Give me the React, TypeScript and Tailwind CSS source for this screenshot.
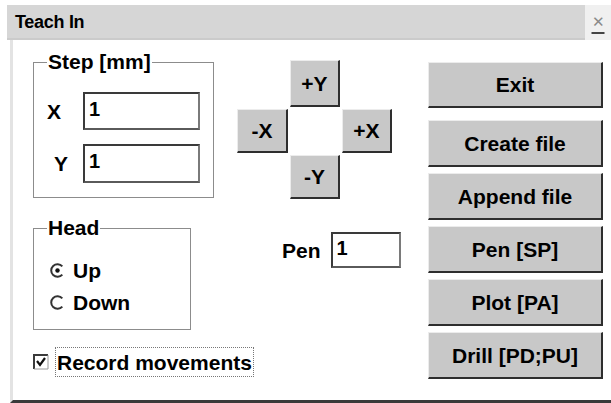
import React from "react";

const face = "bg-[#c8c8c8] border-r-2 border-b-2 border-r-[#2e2e2e] border-b-[#2e2e2e] border-t border-l border-t-[#ececec] border-l-[#ececec]";

function PushButton({ label, className = "" }: { label: string; className?: string }) {
  return (
    <button
      type="button"
      className={`${face} flex items-center justify-center text-[21px] font-bold text-black leading-none ${className}`}
    >
      {label}
    </button>
  );
}

function Field({ className = "" }: { className?: string }) {
  return (
    <input
      readOnly
      value="1"
      className={`bg-white border-2 border-t-[#3a3a3a] border-l-[#3a3a3a] border-r-[#7a7a7a] border-b-[#5a5a5a] pl-[4px] pb-[4px] text-[20px] font-bold text-black leading-none outline-none ${className}`}
    />
  );
}

function Radio({ checked }: { checked?: boolean }) {
  return (
    <svg width="15" height="15" viewBox="0 0 15 15" className="shrink-0">
      <path d="M12.3 3.4 A6.3 6.3 0 1 0 12.3 11.6" fill="none" stroke="#333" strokeWidth="2" />
      {checked && <circle cx="7.5" cy="7.5" r="2.2" fill="#111" />}
    </svg>
  );
}

function GroupBox({ title, children, className = "" }: { title: string; children: React.ReactNode; className?: string }) {
  return (
    <fieldset className={`border border-[#8c8c8c] px-[13px] ${className}`}>
      <legend className="px-[1px] text-[21px] font-bold leading-[24px] text-black">{title}</legend>
      {children}
    </fieldset>
  );
}

export default function App() {
  return (
    <div className="w-[611px] h-[403px] bg-white overflow-hidden font-['Liberation_Sans',Arial,sans-serif] text-black">
      {/* title bar */}
      <div className="flex h-[40px] pt-[5px]">
        <div className="ml-[7px] flex-1 flex items-center bg-[#d6d6d6] pl-[8px] border-b-2 border-[#cbcbcb]">
          <span className="text-[18px] font-bold tracking-[-0.3px] leading-none">Teach In</span>
        </div>
        <div className="w-[26px] flex items-start justify-center bg-[#f0f0f0]">
          <span className="mt-[9px] text-[15px] leading-none text-[#8a8a8a] underline decoration-[#444] decoration-2 underline-offset-[5px]">✕</span>
        </div>
      </div>

      {/* body */}
      <div className="ml-[10px] h-[363px] border-l-[3px] border-l-[#e3e3e3] border-b-[3px] border-b-[#3a3a3a] flex items-start">
        {/* left column */}
        <div className="ml-[20px] mt-[10px] w-[180px] flex flex-col">
          <GroupBox title="Step [mm]" className="pt-[18px] pb-[14px]">
            <div className="flex flex-col gap-[14px]">
              <div className="flex items-center h-[38px]">
                <span className="w-[36px] text-[21px] font-bold leading-none">X</span>
                <Field className="w-[117px] h-[38px]" />
              </div>
              <div className="flex items-center h-[39px]">
                <span className="w-[36px] pl-[7px] text-[21px] font-bold leading-none">Y</span>
                <Field className="w-[117px] h-[39px]" />
              </div>
            </div>
          </GroupBox>

          <GroupBox title="Head" className="mt-[18px] w-[158px] pt-[15px] pb-[12px]">
            <div className="flex flex-col gap-[2px]">
              <div className="flex items-center h-[30px] pl-[3px] gap-[8px]">
                <Radio checked />
                <span className="text-[21px] font-bold leading-none">Up</span>
              </div>
              <div className="flex items-center h-[30px] pl-[3px] gap-[8px]">
                <Radio />
                <span className="text-[21px] font-bold leading-none">Down</span>
              </div>
            </div>
          </GroupBox>

          <div className="mt-[17px] flex items-center h-[30px]">
            <svg width="16" height="16" viewBox="0 0 16 16" className="shrink-0">
              <path d="M1 15 V1 H15" fill="none" stroke="#3a3a3a" strokeWidth="2" />
              <path d="M1 15 H15 V1" fill="none" stroke="#9a9a9a" strokeWidth="1" />
              <path d="M4 7 L7 11 L12 4" fill="none" stroke="#111" strokeWidth="2.2" />
            </svg>
            <span className="ml-[6px] h-[30px] flex items-center px-[1px] border border-dotted border-[#777] text-[21px] font-bold leading-none whitespace-nowrap">
              Record movements
            </span>
          </div>
        </div>

        {/* middle column */}
        <div className="ml-[24px] mt-[20px] w-[163px] flex flex-col">
          <div className="grid grid-cols-[51px_50px_50px] grid-rows-[47px_44px_44px] gap-x-[2px] gap-y-[2px]">
            <div />
            <PushButton label="+Y" className="text-[20px]" />
            <div />
            <PushButton label="-X" className="text-[20px]" />
            <div />
            <PushButton label="+X" className="text-[20px]" />
            <div />
            <PushButton label="-Y" className="text-[20px]" />
            <div />
          </div>
          <div className="mt-[33px] ml-[45px] flex items-center">
            <span className="text-[21px] font-bold leading-none">Pen</span>
            <Field className="ml-[10px] w-[70px] h-[36px]" />
          </div>
        </div>

        {/* right column */}
        <div className="ml-[28px] mt-[22px] w-[175px] flex flex-col gap-[6px]">
          <PushButton label="Exit" className="h-[46px] mb-[6px]" />
          <PushButton label="Create file" className="h-[47px]" />
          <PushButton label="Append file" className="h-[47px]" />
          <PushButton label="Pen [SP]" className="h-[47px]" />
          <PushButton label="Plot [PA]" className="h-[47px]" />
          <PushButton label="Drill [PD;PU]" className="h-[47px]" />
        </div>
      </div>
    </div>
  );
}
